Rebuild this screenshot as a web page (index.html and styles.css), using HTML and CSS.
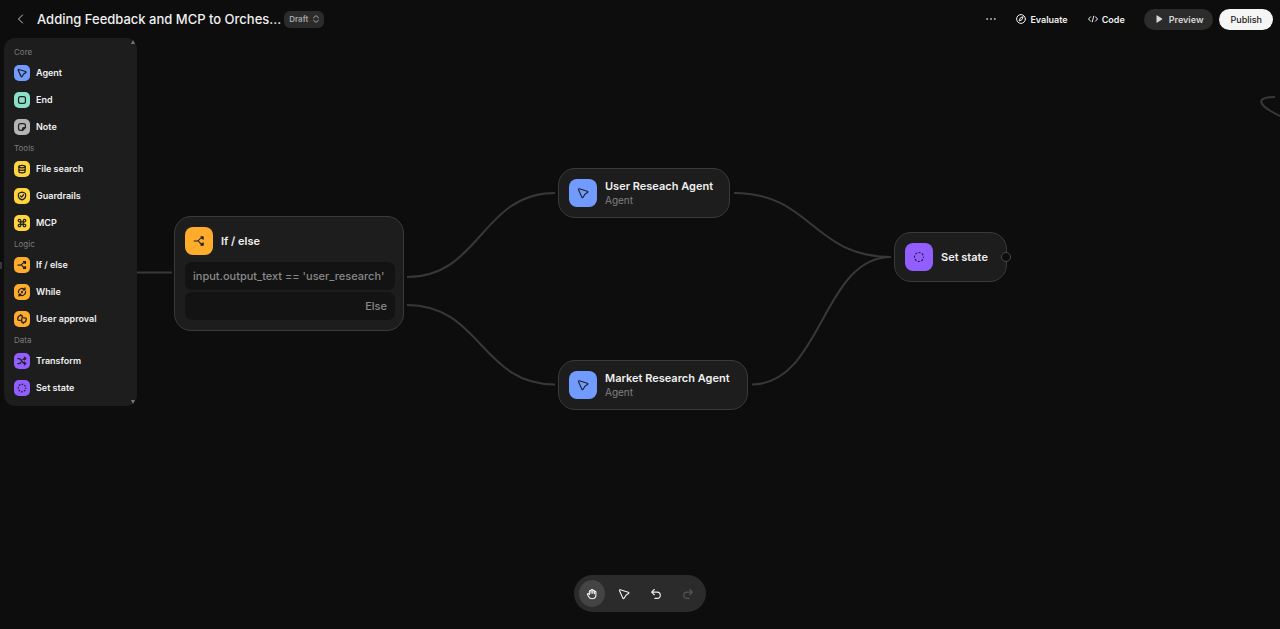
FILE: index.html
```html
<!DOCTYPE html>
<html lang="en">
<head>
<meta charset="utf-8">
<meta name="viewport" content="width=device-width, initial-scale=1">
<title>Agent Builder</title>
<link rel="stylesheet" href="styles.css">
</head>
<body>
<svg class="symbols" aria-hidden="true">
  <symbol id="i-agent" viewBox="0 0 16 16"><path d="M3 2.400 13.800 5.600c1 .3 1 1.400.2 1.800L10.600 9.600 8.200 13.600c-.5.800-1.500.7-1.800-.2L2 3.600c-.3-.8.200-1.400 1-1.200Z"/></symbol>
  <symbol id="i-end" viewBox="0 0 16 16"><rect x="2.500" y="2.500" width="11" height="11" rx="3"/></symbol>
  <symbol id="i-note" viewBox="0 0 16 16"><path d="M5.500 2.500h5a3 3 0 0 1 3 3v3.300l-4.700 4.700H5.500a3 3 0 0 1-3-3v-5a3 3 0 0 1 3-3ZM8.800 13v-2.200c0-1.200.8-2 2-2H13"/></symbol>
  <symbol id="i-file" viewBox="0 0 16 16"><ellipse cx="8" cy="4" rx="5" ry="2"/><path d="M3 4v8c0 1.100 2.200 2 5 2s5-.9 5-2V4M3 8c0 1.100 2.200 2 5 2s5-.9 5-2"/></symbol>
  <symbol id="i-guard" viewBox="0 0 16 16"><path d="M8 1.800 12.300 3.200c.9.3 1.400.9 1.400 1.800v3.300c0 2.800-2.500 4.600-5.700 5.900-3.200-1.300-5.700-3.100-5.700-5.900V5c0-.9.500-1.500 1.400-1.800ZM5.700 8l1.700 1.700L10.500 6"/></symbol>
  <symbol id="i-mcp" viewBox="0 0 16 16"><path d="M6 6v4h4V6ZM6 6H4.100A2 2 0 1 1 6 4.100ZM10 6V4.100A2 2 0 1 1 11.900 6ZM6 10v1.900A2 2 0 1 1 4.100 10ZM10 10h1.900a2 2 0 1 1-1.900 1.900Z"/></symbol>
  <symbol id="i-branch" viewBox="0 0 16 16"><path d="M1.500 8H5c1.800 0 2.600-.7 3.500-2C9.400 4.700 10 4 12 4M6.500 8c2.200.2 2.500 4 5.500 4"/><path class="solid" d="M10.500 2.500h3v3ZM10.500 13.500h3v-3Z"/></symbol>
  <symbol id="i-while" viewBox="0 0 16 16"><path d="M2.300 8.500A5.700 5.700 0 0 1 12.300 4.300M13.700 7.500A5.700 5.700 0 0 1 3.700 11.700M12.800 1.500v3.200H9.600M3.200 14.500v-3.200h3.200"/><circle cx="8" cy="8" r=".8"/></symbol>
  <symbol id="i-approval" viewBox="0 0 16 16"><path d="M5.500 10H3.200C1.800 10 .9 8.900 1.200 7.600l.7-2.800C2.200 3.700 3 3 4.100 3L6 1.200c.8.300 1 1 .8 1.800h1.700v3M10.500 6h2.300c1.400 0 2.300 1.100 2 2.400l-.7 2.800c-.3 1.100-1.100 1.800-2.200 1.800L10 14.800c-.8-.3-1-1-.8-1.800H7.500V7.500"/></symbol>
  <symbol id="i-transform" viewBox="0 0 16 16"><path d="M1.500 4H3c2.500 0 3.200 1.500 4.700 4s2.300 4 5.800 4M1.500 12H3c1.600 0 2.500-.8 3.400-2M9.500 5.500C10.300 4.400 11.200 4 13.500 4M11.800 1.800 14 4l-2.200 2.200M11.800 9.800 14 12l-2.200 2.200"/></symbol>
  <symbol id="i-state" viewBox="0 0 16 16"><circle cx="8" cy="8" r="6" stroke-linecap="butt" stroke-dasharray="2.700 2.012" stroke-dashoffset="1.350"/></symbol>
  <symbol id="i-hand" viewBox="0 0 16 16"><path d="M4.600 8.800 3.400 7.600c-.8-.7-1.900.3-1.400 1.200l1.600 2.900c.9 1.600 2.300 2.600 4.400 2.600 3.200 0 5.200-2.100 5.200-4.900V5.500c0-1.300-2-1.300-2 0V7.500 4c0-1.300-2.200-1.300-2.200 0v3V3c0-1.300-2.200-1.300-2.200 0v4V4.300c0-1.300-2.200-1.300-2.200 0Z"/></symbol>
  <symbol id="i-undo" viewBox="0 0 16 16"><path d="M5.700 2 2.200 5.500l3.500 3.500M2.400 5.500h7.100a4.200 4.200 0 0 1 0 8.400H6.500"/></symbol>
  <symbol id="i-redo" viewBox="0 0 16 16"><path d="m10.300 2 3.500 3.500-3.500 3.500M13.600 5.500H6.500a4.200 4.200 0 0 0 0 8.400H9.500"/></symbol>
</svg>

<div class="app">
  <header class="topbar">
    <div class="heading">
      <button class="back" aria-label="Back"><svg class="icon s10" viewBox="0 0 10 10"><path d="M6.500 1 2.500 5l4 4"/></svg></button>
      <h1 class="title">Adding Feedback and MCP to Orches...</h1>
      <button class="draft">Draft <svg class="icon s8" viewBox="0 0 8 8"><path d="M1.500 2.800 4 .6l2.500 2.200M1.500 5.200 4 7.400l2.500-2.200"/></svg></button>
    </div>
    <nav class="actions" aria-label="Workflow actions">
      <button class="link more" aria-label="More"><svg class="s10 dots" viewBox="0 0 10 10"><circle cx="1.200" cy="5" r="1"/><circle cx="5" cy="5" r="1"/><circle cx="8.800" cy="5" r="1"/></svg></button>
      <button class="link"><svg class="icon s10" viewBox="0 0 10 10"><circle cx="5" cy="5" r="4.400"/><path d="M7 3 5.800 5.800 3 7l1.200-2.800Z"/></svg>Evaluate</button>
      <button class="link code"><svg class="icon s10" viewBox="0 0 10 10"><path d="M2.500 2.800.5 5l2 2.200M7.500 2.800l2 2.200-2 2.200M5.700 2.200 4.300 7.800"/></svg>Code</button>
      <button class="pill preview"><svg class="s8 dots" viewBox="0 0 8 8"><path d="M1.500.8v6.400c0 .5.400.7.800.4L7 4.500c.4-.3.400-.7 0-1L2.300.4c-.4-.3-.8-.1-.8.4Z"/></svg>Preview</button>
      <button class="pill publish">Publish</button>
    </nav>
  </header>

  <aside class="palette">
    <section class="group">
      <h2 class="group-name">Core</h2>
      <button class="item"><span class="tile blue"><svg class="icon"><use href="#i-agent"/></svg></span>Agent</button>
      <button class="item"><span class="tile mint"><svg class="icon"><use href="#i-end"/></svg></span>End</button>
      <button class="item"><span class="tile gray"><svg class="icon"><use href="#i-note"/></svg></span>Note</button>
    </section>
    <section class="group">
      <h2 class="group-name">Tools</h2>
      <button class="item"><span class="tile yellow"><svg class="icon"><use href="#i-file"/></svg></span>File search</button>
      <button class="item"><span class="tile yellow"><svg class="icon"><use href="#i-guard"/></svg></span>Guardrails</button>
      <button class="item"><span class="tile yellow"><svg class="icon"><use href="#i-mcp"/></svg></span>MCP</button>
    </section>
    <section class="group">
      <h2 class="group-name">Logic</h2>
      <button class="item"><span class="tile orange"><svg class="icon"><use href="#i-branch"/></svg></span>If / else</button>
      <button class="item"><span class="tile orange"><svg class="icon"><use href="#i-while"/></svg></span>While</button>
      <button class="item"><span class="tile orange"><svg class="icon"><use href="#i-approval"/></svg></span>User approval</button>
    </section>
    <section class="group">
      <h2 class="group-name">Data</h2>
      <button class="item"><span class="tile purple"><svg class="icon"><use href="#i-transform"/></svg></span>Transform</button>
      <button class="item"><span class="tile purple"><svg class="icon"><use href="#i-state"/></svg></span>Set state</button>
    </section>
    <span class="scroll-up"></span>
    <span class="scroll-down"></span>
  </aside>

  <main class="canvas">
    <svg class="edges" aria-hidden="true">
      <path d="M120 272.500H172"/>
      <path d="M1 262v7"/>
      <path d="M407 277C481 277 481 193 555 193"/>
      <path d="M407 305C481 305 481 384.500 555 384.500"/>
      <path d="M734 193C812 193 812 257 891 257"/>
      <path d="M752 384.500C822 384.500 822 257 891 257"/>
      <path d="M1275 97C1255 97 1257 105 1280 116"/>
    </svg>
    <article class="node branch">
      <div class="node-head"><span class="tile large orange"><svg class="icon"><use href="#i-branch"/></svg></span><h3 class="node-name">If / else</h3></div>
      <p class="case">input.output_text == 'user_research'</p>
      <p class="case else">Else</p>
    </article>
    <article class="node user-research">
      <div class="node-head"><span class="tile large blue"><svg class="icon"><use href="#i-agent"/></svg></span><div><h3 class="node-name">User Reseach Agent</h3><p class="kind">Agent</p></div></div>
    </article>
    <article class="node market-research">
      <div class="node-head"><span class="tile large blue"><svg class="icon"><use href="#i-agent"/></svg></span><div><h3 class="node-name">Market Research Agent</h3><p class="kind">Agent</p></div></div>
    </article>
    <article class="node set-state">
      <div class="node-head"><span class="tile large purple"><svg class="icon"><use href="#i-state"/></svg></span><h3 class="node-name">Set state</h3></div>
      <span class="port"></span>
    </article>
  </main>

  <div class="tools" role="toolbar" aria-label="Canvas tools">
    <button class="tool active" aria-label="Pan"><svg class="icon"><use href="#i-hand"/></svg></button>
    <button class="tool" aria-label="Select"><svg class="icon"><use href="#i-agent"/></svg></button>
    <button class="tool" aria-label="Undo"><svg class="icon"><use href="#i-undo"/></svg></button>
    <button class="tool" aria-label="Redo" disabled><svg class="icon"><use href="#i-redo"/></svg></button>
  </div>
</div>
</body>
</html>
```

FILE: styles.css
```css
* { box-sizing: border-box; }

body {
  margin: 0;
  background: #0d0d0d;
  color: #f0f0f0;
  font-family: Inter, "Liberation Sans", sans-serif;
  font-size: 10px;
}

h1, h2, h3, p { margin: 0; font-weight: inherit; }

button {
  display: flex;
  align-items: center;
  margin: 0;
  padding: 0;
  border: 0;
  background: none;
  color: inherit;
  font: inherit;
  white-space: nowrap;
}

.symbols { position: absolute; width: 0; height: 0; }

.icon {
  flex: none;
  fill: none;
  stroke: currentColor;
  stroke-width: 1;
  stroke-linecap: round;
  stroke-linejoin: round;
}
.dots, .solid { fill: currentColor; }
.s8 { width: 8px; height: 8px; }
.s10 { width: 10px; height: 10px; }

.app {
  position: relative;
  display: flex;
  flex-direction: column;
  align-items: flex-start;
  min-height: 100vh;
  overflow: hidden;
}

/* Top bar */
.topbar {
  z-index: 1;
  display: flex;
  align-items: center;
  justify-content: space-between;
  align-self: stretch;
  height: 38px;
  padding: 0 7px 0 16px;
}
.heading { display: flex; align-items: center; }
.back { width: 21px; height: 20px; color: #c8c8c8; }
.title { font-size: 13px; font-weight: 500; line-height: 16px; white-space: nowrap; }
.draft {
  gap: 4px;
  height: 17px;
  margin-left: 3px;
  padding: 0 4px 0 5px;
  border-radius: 6px;
  background: #2b2b2b;
  color: #a5a5a5;
  font-size: 8px;
  font-weight: 600;
}
.actions { display: flex; align-items: center; font-size: 9px; font-weight: 600; }
.link { gap: 4px; margin-right: 20px; }
.code { margin-right: 19px; }
.more { color: #b0b0b0; }
.pill { height: 21px; border-radius: 11px; }
.preview { gap: 6px; margin-right: 6px; padding: 0 10px 0 11px; background: #2c2c2c; color: #d8d8d8; }
.publish { padding: 0 11px; background: #f5f5f5; color: #1a1a1a; font-weight: 500; }

/* Node palette */
.palette {
  position: relative;
  z-index: 1;
  width: 133px;
  margin-left: 4px;
  padding: 7px 10px 4px;
  border-radius: 11px;
  background: #1d1d1d;
}
.group { padding-bottom: 1px; }
.group-name { color: #7c7c7c; font-size: 8px; line-height: 14px; }
.item { gap: 6px; width: 100%; height: 27px; font-size: 9px; font-weight: 600; }
.tile {
  display: grid;
  flex: none;
  place-items: center;
  width: 16px;
  height: 16px;
  border-radius: 5px;
  color: #202020;
}
.tile .icon { width: 10px; height: 10px; stroke-width: 2; }
.blue { background: #719bff; }
.mint { background: #8be0c9; }
.gray { background: #b4b4b4; }
.yellow { background: #ffd43c; }
.orange { background: #ffab2b; }
.purple { background: #925eff; }

.scroll-up, .scroll-down {
  position: absolute;
  right: 2px;
  border: 2px solid transparent;
}
.scroll-up { top: 0; border-bottom: 4px solid #777777; }
.scroll-down { bottom: 0; border-top: 4px solid #777777; }

/* Canvas */
.canvas { position: absolute; inset: 0; }
.edges { width: 100%; height: 100%; fill: none; stroke: #383838; stroke-width: 2; }
.node {
  position: absolute;
  padding: 10px;
  border: 1px solid #3a3a3a;
  border-radius: 17px;
  background: #1d1d1d;
}
.node-head { display: flex; align-items: center; gap: 8px; }
.node-name { font-size: 11px; font-weight: 600; line-height: 14px; white-space: nowrap; }
.kind { color: #808080; font-size: 10px; line-height: 14px; }
.tile.large { width: 28px; height: 28px; border-radius: 8px; }
.large .icon { width: 12px; height: 12px; stroke-width: 1.500; }
.branch { left: 174px; top: 216px; width: 230px; height: 115px; padding-right: 8px; }
.user-research { left: 558px; top: 168px; width: 172px; }
.market-research { left: 558px; top: 360px; width: 190px; }
.set-state { left: 894px; top: 232px; width: 113px; }
.case {
  margin-top: 2px;
  padding: 0 8px;
  border-radius: 7px;
  background: #131313;
  color: #888888;
  font-size: 11px;
  font-weight: 500;
  line-height: 28px;
  white-space: nowrap;
}
.node-head + .case { margin-top: 7px; }
.else { text-align: right; }
.port {
  position: absolute;
  top: 19px;
  right: -5px;
  width: 10px;
  height: 10px;
  border: 1px solid #484848;
  border-radius: 50%;
  background: #0d0d0d;
}

/* Canvas tools */
.tools {
  position: absolute;
  bottom: 17px;
  left: 50%;
  z-index: 1;
  display: flex;
  gap: 6px;
  padding: 5px;
  border-radius: 19px;
  background: #2b2b2b;
  transform: translateX(-50%);
}
.tool { justify-content: center; width: 26px; height: 27px; border-radius: 50%; }
.tool .icon { width: 12px; height: 12px; stroke-width: 1.500; }
.active { background: #444444; }
.tool:disabled { color: #555555; }
```
